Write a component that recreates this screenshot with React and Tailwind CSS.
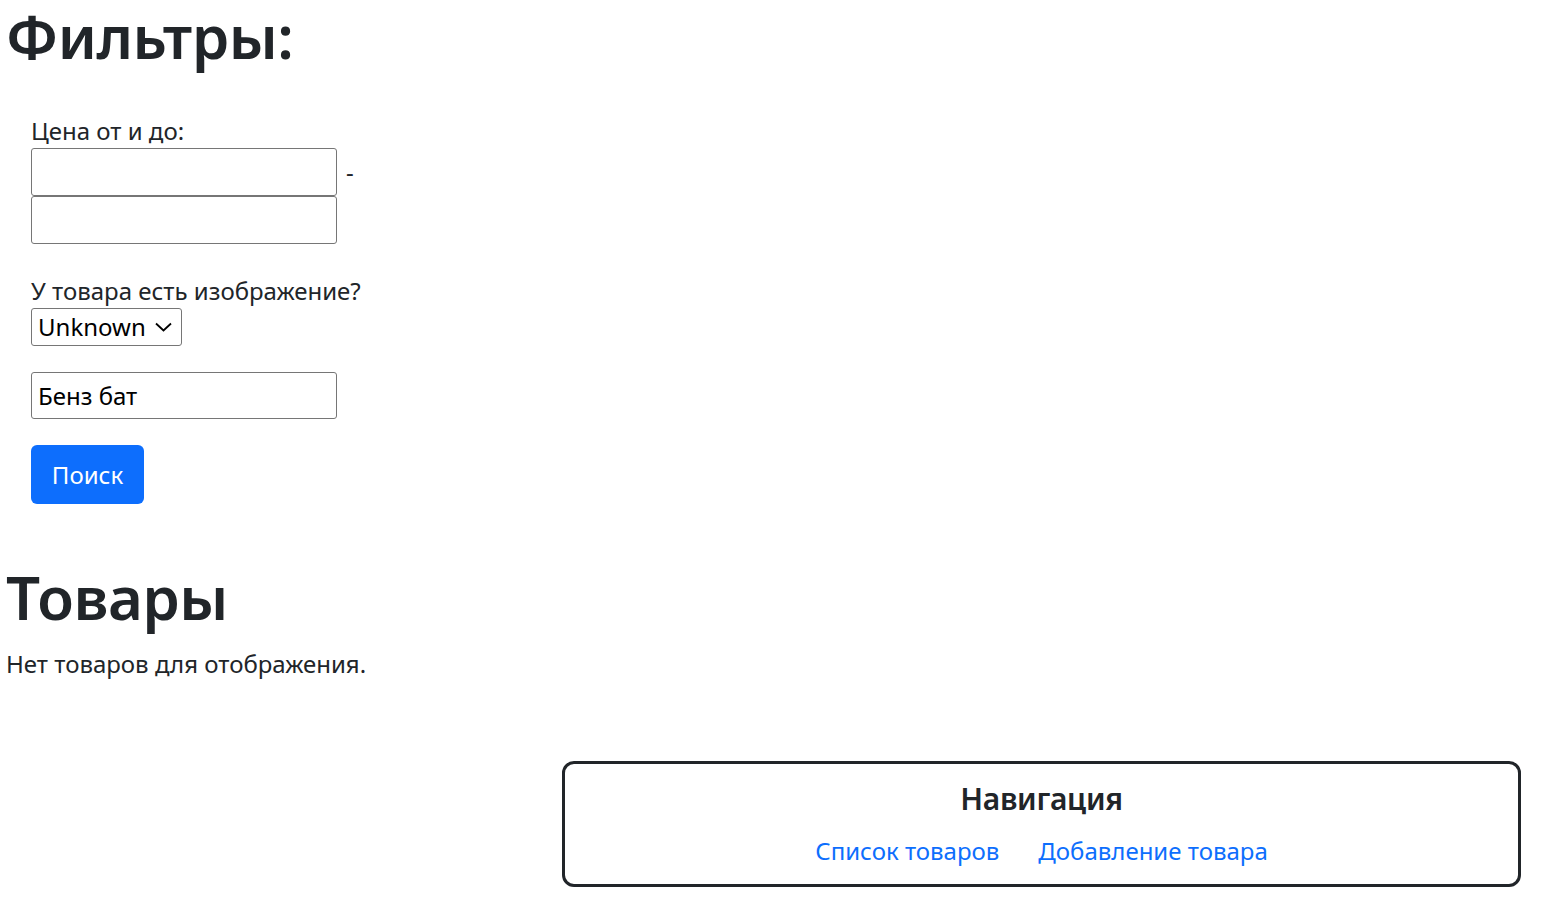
import React from "react";

const F = { fontFamily: '"Noto Sans", sans-serif' };

export default function App() {
  return (
    <div style={F} className="min-h-[914px] bg-white text-[#212529] text-[24px] leading-[36px]">
      <div className="px-[6px]">
        <h1 className="text-[60px] font-semibold leading-[72px] tracking-[-0.5px] m-0">Фильтры:</h1>
        <div className="pl-[25px] pt-[42px]">
          <label className="block leading-[34px]">Цена от и до:</label>
          <div className="flex items-center">
            <input className="w-[306px] h-[48px] border border-[#767676] rounded-[3px] bg-white" />
            <span className="ml-[9px] leading-[36px] text-[24px]">-</span>
          </div>
          <input className="block w-[306px] h-[48px] border border-[#767676] rounded-[3px] bg-white" />
          <label className="block mt-[30px] leading-[34px]">У товара есть изображение?</label>
          <div className="flex items-center w-[151px] h-[38px] border border-[#767676] rounded-[3px] pl-[6px] pr-[9px] justify-between text-black">
            <span className="leading-[36px]">Unknown</span>
            <svg width="17" height="10" viewBox="0 0 17 10" fill="none" stroke="#000" strokeWidth="1.8">
              <path d="M1 1.5 L8.5 8.5 L16 1.5" />
            </svg>
          </div>
          <div className="mt-[26px] flex items-center w-[306px] h-[47px] border border-[#767676] rounded-[3px] px-[6px] text-black">
            Бенз бат
          </div>
          <button className="mt-[26px] block bg-[#0d6efd] text-white rounded-[6px] w-[113px] h-[59px] text-[24px] leading-[36px]">
            Поиск
          </button>
        </div>
        <h1 className="mt-[57px] text-[60px] font-semibold leading-[72px] tracking-[-0.5px]">Товары</h1>
        <p className="mt-[13px] leading-[36px]">Нет товаров для отображения.</p>
      </div>
      <div className="flex mt-[79px] pl-[562px] pr-[32px]">
        <div className="flex-1 h-[126px] border-[3px] border-[#212529] rounded-[12px] flex flex-col items-center">
          <h5 className="mt-[17px] text-[30px] font-semibold leading-[36px] tracking-[-0.3px]">Навигация</h5>
          <div className="mt-[16px] flex gap-[39px] text-[#0d6efd] leading-[36px]">
            <a href="#" className="text-[#0d6efd]">Список товаров</a>
            <a href="#" className="text-[#0d6efd]">Добавление товара</a>
          </div>
        </div>
      </div>
    </div>
  );
}
